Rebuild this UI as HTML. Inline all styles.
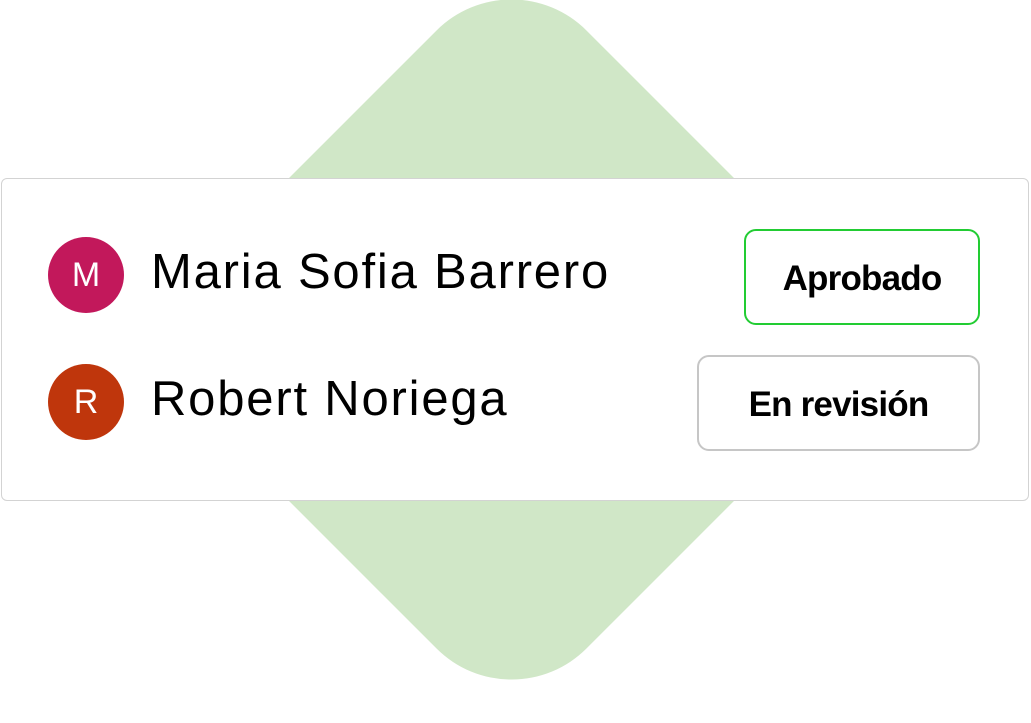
<!DOCTYPE html>
<html><head><style>
body{margin:0;width:1031px;height:680px;background:#fff;position:relative;overflow:hidden;font-family:"Liberation Sans",sans-serif}
.dia{position:absolute;left:240px;top:68px;width:543px;height:543px;background:#d0e7c7;border-radius:106px;transform:rotate(45deg)}
.card{position:absolute;left:1px;top:178px;width:1026px;height:321px;background:#fff;border:1.5px solid #d3d3d3;border-radius:6px}
.av{position:absolute;width:76px;height:76px;border-radius:50%;color:#fff;font-size:34px;text-align:center;line-height:76px;left:48px}
.nm{position:absolute;left:151px;font-size:49px;color:#000;line-height:1;letter-spacing:1.8px}
.btn{position:absolute;box-sizing:border-box;border-radius:12px;font-weight:bold;font-size:35px;text-align:center;color:#000;letter-spacing:-0.8px}
</style></head><body>
<div class="dia"></div>
<div class="card"></div>
<div class="av" style="top:237px;background:#c2185b">M</div>
<div class="nm" style="top:248px">Maria Sofia Barrero</div>
<div class="av" style="top:364px;background:#bf360c">R</div>
<div class="nm" style="top:375px">Robert Noriega</div>
<div class="btn" style="left:744px;top:229px;width:236px;height:96px;border:2px solid #22cc33;line-height:96px">Aprobado</div>
<div class="btn" style="left:697px;top:355px;width:283px;height:96px;border:2px solid #c6c6c6;line-height:96px">En revisión</div>
</body></html>
